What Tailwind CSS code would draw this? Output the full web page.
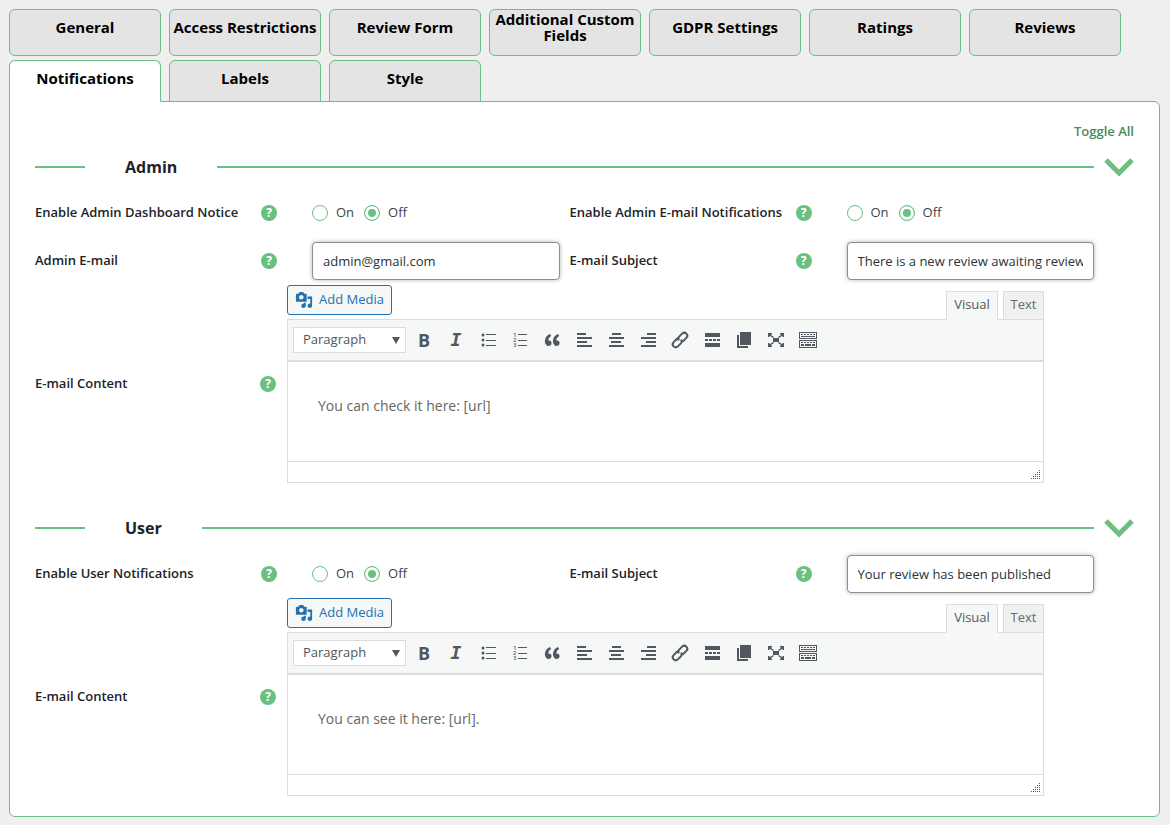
<!DOCTYPE html>
<html lang="en">
<head>
  <meta charset="UTF-8" />
  <meta name="viewport" content="width=device-width, initial-scale=1.0" />
  <title>Review Settings | Notifications</title>
  <script src="https://cdn.jsdelivr.net/npm/@tailwindcss/browser@4"></script>
</head>
<body class="bg-[#efefef] font-['Open_Sans','Noto_Sans',sans-serif] text-[13px] text-[#3c434a] px-[9px] pt-[9px] pb-2">

<!-- icon sprite -->
<svg class="hidden" xmlns="http://www.w3.org/2000/svg">
  <symbol id="i-media" viewBox="0 0 20 20">
    <path d="M13 11V4c0-.55-.45-1-1-1h-1.670L9 1H5L3.670 3H2c-.55 0-1 .45-1 1v7c0 .55.45 1 1 1h10c.55 0 1-.45 1-1zM7 4.500c1.380 0 2.500 1.120 2.500 2.500S8.380 9.500 7 9.500 4.500 8.380 4.500 7 5.620 4.500 7 4.500zM14 6h5v10.500c0 1.380-1.120 2.500-2.500 2.500S14 17.880 14 16.500s1.120-2.500 2.500-2.500c.17 0 .34.020.5.050V9h-3V6zm-4 8.050V13h2v3.500c0 1.380-1.120 2.500-2.500 2.500S7 17.880 7 16.500 8.120 14 9.500 14c.17 0 .34.020.5.050z" fill-rule="evenodd" />
  </symbol>
  <symbol id="i-ul" viewBox="0 0 20 20">
    <circle cx="5" cy="5" r="1.500" /><circle cx="5" cy="10" r="1.500" /><circle cx="5" cy="15" r="1.500" />
    <path d="M8 4h10v1H8zM8 10h10v1H8zM8 15h10v1H8z" />
  </symbol>
  <symbol id="i-ol" viewBox="0 0 20 20">
    <text x="3" y="7" font-size="6" font-weight="600">1</text><text x="3" y="12" font-size="6" font-weight="600">2</text><text x="3" y="17" font-size="6" font-weight="600">3</text>
    <path d="M8 4h9v1H8zM8 10h9v1H8zM8 15h9v1H8z" />
  </symbol>
  <symbol id="i-quote" viewBox="0 0 20 20">
    <path d="M9.490 13.220c0-.740-.2-1.380-.61-1.900-.62-.780-1.830-.880-2.530-.720-.290-1.650 1.110-3.750 2.920-4.650L7.880 4c-2.730 1.300-5.420 4.280-4.960 8.050C3.210 14.430 4.590 16 6.540 16c.85 0 1.560-.25 2.120-.750s.83-1.180.83-2.030zm8.050 0c0-.740-.2-1.380-.61-1.900-.63-.780-1.830-.880-2.530-.720-.290-1.650 1.110-3.750 2.920-4.650L15.930 4c-2.730 1.300-5.410 4.280-4.950 8.050.29 2.380 1.660 3.950 3.610 3.950.85 0 1.560-.25 2.120-.750s.83-1.180.83-2.030z" />
  </symbol>
  <symbol id="i-left" viewBox="0 0 20 20">
    <path d="M3 3h9v2H3zM3 7h15v2H3zM3 11h10v2H3zM3 15h15v2H3z" />
  </symbol>
  <symbol id="i-center" viewBox="0 0 20 20">
    <path d="M6 3h9v2H6zM3 7h15v2H3zM5 11h10v2H5zM3 15h15v2H3z" />
  </symbol>
  <symbol id="i-right" viewBox="0 0 20 20">
    <path d="M9 3h9v2H9zM3 7h15v2H3zM8 11h10v2H8zM3 15h15v2H3z" />
  </symbol>
  <symbol id="i-link" viewBox="0 0 20 20">
    <g transform="rotate(-45 10 10)" fill="none" stroke="currentColor" stroke-width="2">
      <path d="M11 10.500A3 3 0 0 1 8.500 13H4a3 3 0 0 1 0-6h4.500a3 3 0 0 1 2 .800" />
      <path d="M9 9.500A3 3 0 0 1 11.500 7H16a3 3 0 0 1 0 6h-4.500a3 3 0 0 1-2-.800" />
    </g>
  </symbol>
  <symbol id="i-more" viewBox="0 0 20 20">
    <path d="M3 3h15v4H3zM3 9h3v2H3zM7 9h3v2H7zM11 9h3v2h-3zM15 9h3v2h-3zM3 13h15v4H3z" />
  </symbol>
  <symbol id="i-paste" viewBox="0 0 20 20">
    <path d="M6 2h11v13H6zM3 5h2v11h9v2H3z" />
  </symbol>
  <symbol id="i-full" viewBox="0 0 20 20">
    <path d="M7 8h6v4H7zM2 3h4v1L5 5l3 2-1 1-3-2-1 1H2zM18 3v4h-1l-1-1-3 2-1-1 3-2-1-1V3zM2 17v-4h1l1 1 3-2 1 1-3 2 1 1v1zM18 17h-4v-1l1-1-3-2 1-1 3 2 1-1h1z" />
  </symbol>
  <symbol id="i-kitchen" viewBox="0 0 20 20">
    <path fill-rule="evenodd" d="M1 2h18v7H1zM2 3v5h16V3zM1 10h18v8H1zM2 11v6h16v-6z" />
    <path d="M3 4h2v1H3zM6 4h2v1H6zM9 4h2v1H9zM12 4h2v1h-2zM15 4h2v1h-2zM3 6h14v1H3zM3 12h2v1H3zM6 12h2v1H6zM9 12h2v1H9zM12 12h2v1h-2zM15 12h2v1h-2zM3 14h3v2H3zM7 14h6v2H7zM14 14h3v2h-3z" />
  </symbol>
  <symbol id="i-chevron" viewBox="0 0 30 20">
    <path d="M2 3l13 13L28 3" fill="none" stroke="currentColor" stroke-width="5" />
  </symbol>
  <symbol id="i-grip" viewBox="0 0 10 10">
    <path d="M8 0h1v1H8zM6 2h1v1H6zM8 2h1v1H8zM4 4h1v1H4zM6 4h1v1H6zM8 4h1v1H8zM2 6h1v1H2zM4 6h1v1H4zM6 6h1v1H6zM8 6h1v1H8zM0 8h1v1H0zM2 8h1v1H2zM4 8h1v1H4zM6 8h1v1H6zM8 8h1v1H8z" />
  </symbol>
</svg>

<nav class="relative z-10 flex flex-wrap items-start gap-x-2 gap-y-1 -mb-px text-[15px] leading-4 font-bold text-black text-center">
  <a href="#general" class="w-[152px] h-[47px] pb-3 flex items-center justify-center bg-[#e4e4e4] border border-[#6bbf7f] rounded-md">General</a>
  <a href="#access" class="w-[152px] h-[47px] pb-3 flex items-center justify-center bg-[#e4e4e4] border border-[#6bbf7f] rounded-md whitespace-nowrap">Access Restrictions</a>
  <a href="#form" class="w-[152px] h-[47px] pb-3 flex items-center justify-center bg-[#e4e4e4] border border-[#6bbf7f] rounded-md">Review Form</a>
  <a href="#fields" class="w-[152px] h-[47px] pb-3 flex items-center justify-center bg-[#e4e4e4] border border-[#6bbf7f] rounded-md">Additional Custom Fields</a>
  <a href="#gdpr" class="w-[152px] h-[47px] pb-3 flex items-center justify-center bg-[#e4e4e4] border border-[#6bbf7f] rounded-md">GDPR Settings</a>
  <a href="#ratings" class="w-[152px] h-[47px] pb-3 flex items-center justify-center bg-[#e4e4e4] border border-[#6bbf7f] rounded-md">Ratings</a>
  <a href="#reviews" class="w-[152px] h-[47px] pb-3 flex items-center justify-center bg-[#e4e4e4] border border-[#6bbf7f] rounded-md">Reviews</a>
  <a href="#notifications" class="w-[152px] h-[42px] pb-[7px] flex items-center justify-center bg-white border border-[#6bbf7f] border-b-white rounded-t-md">Notifications</a>
  <a href="#labels" class="w-[152px] h-[42px] pb-[7px] flex items-center justify-center bg-[#e4e4e4] border border-[#6bbf7f] rounded-t-md">Labels</a>
  <a href="#style" class="w-[152px] h-[42px] pb-[7px] flex items-center justify-center bg-[#e4e4e4] border border-[#6bbf7f] rounded-t-md">Style</a>
</nav>

<main class="mr-px px-[25px] pt-4 pb-5 bg-white border border-[#6bbf7f] rounded-md rounded-tl-none">
  <div class="h-[27px] flex items-center justify-end">
    <button type="button" class="text-[13px] font-semibold text-[#478a58]">Toggle All</button>
  </div>

  <!-- Admin -->
  <section>
    <header class="h-11 flex items-center">
      <span class="w-[50px] h-[2px] bg-[#6bbf7f]"></span>
      <h2 class="px-10 text-[16px] font-bold text-[#1d2327]">Admin</h2>
      <span class="flex-1 h-[2px] bg-[#6bbf7f]"></span>
      <button type="button" aria-label="Toggle Admin" class="ml-[10px] text-[#6bbf7f]"><svg class="w-[30px] h-5"><use href="#i-chevron" /></svg></button>
    </header>

    <div class="grid grid-cols-2 pr-[30px]">
      <div role="radiogroup" aria-labelledby="admin-notice" class="h-12 pr-[10px] flex items-center">
        <span id="admin-notice" class="w-[226px] font-semibold text-[#1d2327] whitespace-nowrap">Enable Admin Dashboard Notice</span>
        <span class="mr-[35px] size-4 rounded-full bg-[#6bbf7f] text-white text-[12px] leading-4 font-bold text-center">?</span>
        <label class="flex items-center gap-2 mr-[10px]"><input type="radio" name="admin_notice" class="appearance-none size-4 rounded-full border border-[#6bbf7f] bg-white checked:bg-[#6bbf7f] checked:shadow-[inset_0_0_0_3px_#fff]" />On</label>
        <label class="flex items-center gap-2"><input type="radio" name="admin_notice" checked class="appearance-none size-4 rounded-full border border-[#6bbf7f] bg-white checked:bg-[#6bbf7f] checked:shadow-[inset_0_0_0_3px_#fff]" />Off</label>
      </div>
      <div role="radiogroup" aria-labelledby="admin-mail" class="h-12 pr-[10px] flex items-center">
        <span id="admin-mail" class="w-[226px] font-semibold text-[#1d2327] whitespace-nowrap">Enable Admin E-mail Notifications</span>
        <span class="mr-[35px] size-4 rounded-full bg-[#6bbf7f] text-white text-[12px] leading-4 font-bold text-center">?</span>
        <label class="flex items-center gap-2 mr-[10px]"><input type="radio" name="admin_mail" class="appearance-none size-4 rounded-full border border-[#6bbf7f] bg-white checked:bg-[#6bbf7f] checked:shadow-[inset_0_0_0_3px_#fff]" />On</label>
        <label class="flex items-center gap-2"><input type="radio" name="admin_mail" checked class="appearance-none size-4 rounded-full border border-[#6bbf7f] bg-white checked:bg-[#6bbf7f] checked:shadow-[inset_0_0_0_3px_#fff]" />Off</label>
      </div>
      <div class="h-12 pr-[10px] flex items-center">
        <label for="admin-email" class="w-[226px] font-semibold text-[#1d2327]">Admin E-mail</label>
        <span class="mr-[35px] size-4 rounded-full bg-[#6bbf7f] text-white text-[12px] leading-4 font-bold text-center">?</span>
        <input id="admin-email" type="text" value="admin@gmail.com" class="flex-1 min-w-0 h-[38px] px-[10px] border border-[#8c8f94] rounded text-[#2c3338] bg-white shadow-[0_0_4px_rgba(0,0,0,0.3)]" />
      </div>
      <div class="h-12 pr-[10px] flex items-center">
        <label for="admin-subject" class="w-[226px] font-semibold text-[#1d2327]">E-mail Subject</label>
        <span class="mr-[35px] size-4 rounded-full bg-[#6bbf7f] text-white text-[12px] leading-4 font-bold text-center">?</span>
        <input id="admin-subject" type="text" value="There is a new review awaiting review" class="flex-1 min-w-0 h-[38px] px-[10px] border border-[#8c8f94] rounded text-[#2c3338] bg-white shadow-[0_0_4px_rgba(0,0,0,0.3)]" />
      </div>
    </div>

    <div class="flex items-center pr-[90px]">
      <label for="admin-content" class="w-[225px] font-semibold text-[#1d2327]">E-mail Content</label>
      <span class="mr-[11px] size-4 rounded-full bg-[#6bbf7f] text-white text-[12px] leading-4 font-bold text-center">?</span>
      <div class="flex-1">
        <div class="flex items-start h-[34px]">
          <button type="button" class="h-[30px] w-[105px] flex items-center justify-center gap-[6px] border border-[#2271b1] rounded-[3px] bg-[#f6f7f7] text-[#2271b1]"><svg class="size-[18px] fill-current"><use href="#i-media" /></svg>Add Media</button>
          <div class="relative z-10 ml-auto mt-[6px] flex gap-[5px]">
            <button type="button" class="w-[52px] h-[29px] pb-px border border-[#dcdcde] border-b-[#f6f7f7] bg-[#f6f7f7] text-[#50575e]">Visual</button>
            <button type="button" class="w-[41px] h-[29px] pb-px border border-[#dcdcde] bg-[#f0f0f1] text-[#646970]">Text</button>
          </div>
        </div>
        <div class="border border-[#dcdcde]">
          <div class="h-[42px] pl-[5px] flex items-center bg-[#f6f7f7] border-b-2 border-[#dcdcde] text-[#50575e] fill-current">
            <div class="relative mr-[2px]">
              <select aria-label="Format" class="appearance-none block w-[113px] h-[26px] pl-[9px] border border-[#dcdcde] bg-white"><option>Paragraph</option></select>
              <span class="pointer-events-none absolute right-[6px] top-[10px] border-x-4 border-x-transparent border-t-[7px] border-t-[#50575e]"></span>
            </div>
            <button type="button" aria-label="Bold" class="w-8 text-[18px] leading-5 font-bold">B</button>
            <button type="button" aria-label="Italic" class="w-8 font-['DejaVu_Sans_Mono',monospace] text-[18px] leading-5 font-bold italic">I</button>
            <button type="button" aria-label="Bulleted list" class="w-8 flex justify-center"><svg class="size-5"><use href="#i-ul" /></svg></button>
            <button type="button" aria-label="Numbered list" class="w-8 flex justify-center"><svg class="size-5"><use href="#i-ol" /></svg></button>
            <button type="button" aria-label="Blockquote" class="w-8 flex justify-center"><svg class="size-5"><use href="#i-quote" /></svg></button>
            <button type="button" aria-label="Align left" class="w-8 flex justify-center"><svg class="size-5"><use href="#i-left" /></svg></button>
            <button type="button" aria-label="Align center" class="w-8 flex justify-center"><svg class="size-5"><use href="#i-center" /></svg></button>
            <button type="button" aria-label="Align right" class="w-8 flex justify-center"><svg class="size-5"><use href="#i-right" /></svg></button>
            <button type="button" aria-label="Link" class="w-8 flex justify-center"><svg class="size-5"><use href="#i-link" /></svg></button>
            <button type="button" aria-label="Read more" class="w-8 flex justify-center"><svg class="size-5"><use href="#i-more" /></svg></button>
            <button type="button" aria-label="Page break" class="w-8 flex justify-center"><svg class="size-5"><use href="#i-paste" /></svg></button>
            <button type="button" aria-label="Fullscreen" class="w-8 flex justify-center"><svg class="size-5"><use href="#i-full" /></svg></button>
            <button type="button" aria-label="Toolbar toggle" class="w-8 flex justify-center"><svg class="size-5"><use href="#i-kitchen" /></svg></button>
          </div>
          <textarea id="admin-content" class="block w-full h-[99px] px-[30px] py-8 resize-none overflow-hidden text-[14px] leading-6 text-[#666]">You can check it here: [url]</textarea>
          <div class="h-[21px] pr-[2px] pb-[2px] flex items-end justify-end border-t border-[#dcdcde] text-[#50575e]"><svg class="size-[10px] fill-current"><use href="#i-grip" /></svg></div>
        </div>
      </div>
    </div>
  </section>

  <!-- User -->
  <section class="mt-[23px]">
    <header class="h-11 flex items-center">
      <span class="w-[50px] h-[2px] bg-[#6bbf7f]"></span>
      <h2 class="px-10 text-[16px] font-bold text-[#1d2327]">User</h2>
      <span class="flex-1 h-[2px] bg-[#6bbf7f]"></span>
      <button type="button" aria-label="Toggle User" class="ml-[10px] text-[#6bbf7f]"><svg class="w-[30px] h-5"><use href="#i-chevron" /></svg></button>
    </header>

    <div class="grid grid-cols-2 pr-[30px]">
      <div role="radiogroup" aria-labelledby="user-notice" class="h-12 pr-[10px] flex items-center">
        <span id="user-notice" class="w-[226px] font-semibold text-[#1d2327] whitespace-nowrap">Enable User Notifications</span>
        <span class="mr-[35px] size-4 rounded-full bg-[#6bbf7f] text-white text-[12px] leading-4 font-bold text-center">?</span>
        <label class="flex items-center gap-2 mr-[10px]"><input type="radio" name="user_notice" class="appearance-none size-4 rounded-full border border-[#6bbf7f] bg-white checked:bg-[#6bbf7f] checked:shadow-[inset_0_0_0_3px_#fff]" />On</label>
        <label class="flex items-center gap-2"><input type="radio" name="user_notice" checked class="appearance-none size-4 rounded-full border border-[#6bbf7f] bg-white checked:bg-[#6bbf7f] checked:shadow-[inset_0_0_0_3px_#fff]" />Off</label>
      </div>
      <div class="h-12 pr-[10px] flex items-center">
        <label for="user-subject" class="w-[226px] font-semibold text-[#1d2327]">E-mail Subject</label>
        <span class="mr-[35px] size-4 rounded-full bg-[#6bbf7f] text-white text-[12px] leading-4 font-bold text-center">?</span>
        <input id="user-subject" type="text" value="Your review has been published" class="flex-1 min-w-0 h-[38px] px-[10px] border border-[#8c8f94] rounded text-[#2c3338] bg-white shadow-[0_0_4px_rgba(0,0,0,0.3)]" />
      </div>
    </div>

    <div class="flex items-center pr-[90px]">
      <label for="user-content" class="w-[225px] font-semibold text-[#1d2327]">E-mail Content</label>
      <span class="mr-[11px] size-4 rounded-full bg-[#6bbf7f] text-white text-[12px] leading-4 font-bold text-center">?</span>
      <div class="flex-1">
        <div class="flex items-start h-[34px]">
          <button type="button" class="h-[30px] w-[105px] flex items-center justify-center gap-[6px] border border-[#2271b1] rounded-[3px] bg-[#f6f7f7] text-[#2271b1]"><svg class="size-[18px] fill-current"><use href="#i-media" /></svg>Add Media</button>
          <div class="relative z-10 ml-auto mt-[6px] flex gap-[5px]">
            <button type="button" class="w-[52px] h-[29px] pb-px border border-[#dcdcde] border-b-[#f6f7f7] bg-[#f6f7f7] text-[#50575e]">Visual</button>
            <button type="button" class="w-[41px] h-[29px] pb-px border border-[#dcdcde] bg-[#f0f0f1] text-[#646970]">Text</button>
          </div>
        </div>
        <div class="border border-[#dcdcde]">
          <div class="h-[42px] pl-[5px] flex items-center bg-[#f6f7f7] border-b-2 border-[#dcdcde] text-[#50575e] fill-current">
            <div class="relative mr-[2px]">
              <select aria-label="Format" class="appearance-none block w-[113px] h-[26px] pl-[9px] border border-[#dcdcde] bg-white"><option>Paragraph</option></select>
              <span class="pointer-events-none absolute right-[6px] top-[10px] border-x-4 border-x-transparent border-t-[7px] border-t-[#50575e]"></span>
            </div>
            <button type="button" aria-label="Bold" class="w-8 text-[18px] leading-5 font-bold">B</button>
            <button type="button" aria-label="Italic" class="w-8 font-['DejaVu_Sans_Mono',monospace] text-[18px] leading-5 font-bold italic">I</button>
            <button type="button" aria-label="Bulleted list" class="w-8 flex justify-center"><svg class="size-5"><use href="#i-ul" /></svg></button>
            <button type="button" aria-label="Numbered list" class="w-8 flex justify-center"><svg class="size-5"><use href="#i-ol" /></svg></button>
            <button type="button" aria-label="Blockquote" class="w-8 flex justify-center"><svg class="size-5"><use href="#i-quote" /></svg></button>
            <button type="button" aria-label="Align left" class="w-8 flex justify-center"><svg class="size-5"><use href="#i-left" /></svg></button>
            <button type="button" aria-label="Align center" class="w-8 flex justify-center"><svg class="size-5"><use href="#i-center" /></svg></button>
            <button type="button" aria-label="Align right" class="w-8 flex justify-center"><svg class="size-5"><use href="#i-right" /></svg></button>
            <button type="button" aria-label="Link" class="w-8 flex justify-center"><svg class="size-5"><use href="#i-link" /></svg></button>
            <button type="button" aria-label="Read more" class="w-8 flex justify-center"><svg class="size-5"><use href="#i-more" /></svg></button>
            <button type="button" aria-label="Page break" class="w-8 flex justify-center"><svg class="size-5"><use href="#i-paste" /></svg></button>
            <button type="button" aria-label="Fullscreen" class="w-8 flex justify-center"><svg class="size-5"><use href="#i-full" /></svg></button>
            <button type="button" aria-label="Toolbar toggle" class="w-8 flex justify-center"><svg class="size-5"><use href="#i-kitchen" /></svg></button>
          </div>
          <textarea id="user-content" class="block w-full h-[99px] px-[30px] py-8 resize-none overflow-hidden text-[14px] leading-6 text-[#666]">You can see it here: [url].</textarea>
          <div class="h-[21px] pr-[2px] pb-[2px] flex items-end justify-end border-t border-[#dcdcde] text-[#50575e]"><svg class="size-[10px] fill-current"><use href="#i-grip" /></svg></div>
        </div>
      </div>
    </div>
  </section>
</main>

</body>
</html>
